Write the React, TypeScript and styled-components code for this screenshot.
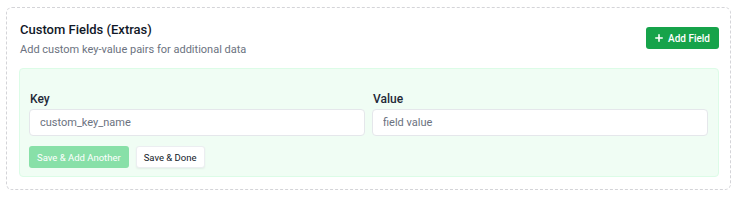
import styled, { createGlobalStyle } from 'styled-components';

const GlobalStyle = createGlobalStyle`
  * { box-sizing: border-box; }
  body {
    margin: 0;
    background: #ffffff;
    font-family: Roboto, "Noto Sans", "Liberation Sans", sans-serif;
    color: #111827;
  }
`;

const Page = styled.div`
  padding: 7px 12px 10px 6px;
`;

const Section = styled.section`
  border: 1px dashed #d4d4d8;
  border-radius: 6px;
  padding: 12px 11px 12px 12px;
`;

const Header = styled.div`
  display: flex;
  justify-content: space-between;
  align-items: flex-start;
  margin-bottom: 10px;
`;

const Title = styled.h3`
  margin: 0 0 0 1px;
  font-size: 13px;
  line-height: 20px;
  font-weight: 500;
  color: #111827;
`;

const Subtitle = styled.p`
  margin: 2px 0 0 1px;
  font-size: 11px;
  line-height: 16px;
  color: #6b7280;
`;

const AddButton = styled.button`
  margin-top: 7px;
  display: flex;
  align-items: center;
  gap: 5px;
  height: 22px;
  padding: 0 9px 0 9px;
  border: none;
  border-radius: 3px;
  background: #16a34a;
  color: #ffffff;
  font-family: inherit;
  font-size: 10px;
  font-weight: 500;
  cursor: pointer;
`;

const Panel = styled.div`
  background: #f0fdf4;
  border: 1px solid #dcfce7;
  border-radius: 4px;
  padding: 21px 10px 8px 9px;
`;

const FieldGrid = styled.div`
  display: grid;
  grid-template-columns: 1fr 1fr;
  gap: 7px;
`;

const Field = styled.label`
  display: flex;
  flex-direction: column;
`;

const Label = styled.span`
  font-size: 12px;
  line-height: 18px;
  font-weight: 500;
  color: #1f2937;
  margin: 0 0 1px 1px;
`;

const Input = styled.input`
  height: 27px;
  padding: 0 10px;
  border: 1px solid #e5e7eb;
  border-radius: 4px;
  background: #ffffff;
  font-family: inherit;
  font-size: 11px;
  color: #111827;
  outline: none;

  &::placeholder {
    color: #6b7280;
  }
`;

const Actions = styled.div`
  display: flex;
  gap: 7px;
  margin-top: 10px;
`;

const ActionButton = styled.button<{ $primary?: boolean }>`
  height: 22px;
  padding: 0 7px;
  border-radius: 3px;
  font-family: inherit;
  font-size: 9.5px;
  font-weight: 400;
  cursor: pointer;
  border: 1px solid ${({ $primary }) => ($primary ? 'transparent' : '#eceef1')};
  background: ${({ $primary }) => ($primary ? '#88e0a8' : '#ffffff')};
  color: ${({ $primary }) => ($primary ? '#ffffff' : '#111827')};
  box-shadow: ${({ $primary }) => ($primary ? 'none' : '0 1px 2px rgba(0,0,0,0.06)')};
`;

const PlusIcon = () => (
  <svg width="8" height="8" viewBox="0 0 10 10" fill="none" stroke="currentColor" strokeWidth="2" strokeLinecap="round">
    <path d="M5 1v8M1 5h8" />
  </svg>
);

export default function App() {
  return (
    <>
      <GlobalStyle />
      <Page>
        <Section>
          <Header>
            <div>
              <Title>Custom Fields (Extras)</Title>
              <Subtitle>Add custom key-value pairs for additional data</Subtitle>
            </div>
            <AddButton>
              <PlusIcon />
              Add Field
            </AddButton>
          </Header>
          <Panel>
            <FieldGrid>
              <Field>
                <Label>Key</Label>
                <Input placeholder="custom_key_name" />
              </Field>
              <Field>
                <Label>Value</Label>
                <Input placeholder="field value" />
              </Field>
            </FieldGrid>
            <Actions>
              <ActionButton $primary>Save &amp; Add Another</ActionButton>
              <ActionButton>Save &amp; Done</ActionButton>
            </Actions>
          </Panel>
        </Section>
      </Page>
    </>
  );
}
